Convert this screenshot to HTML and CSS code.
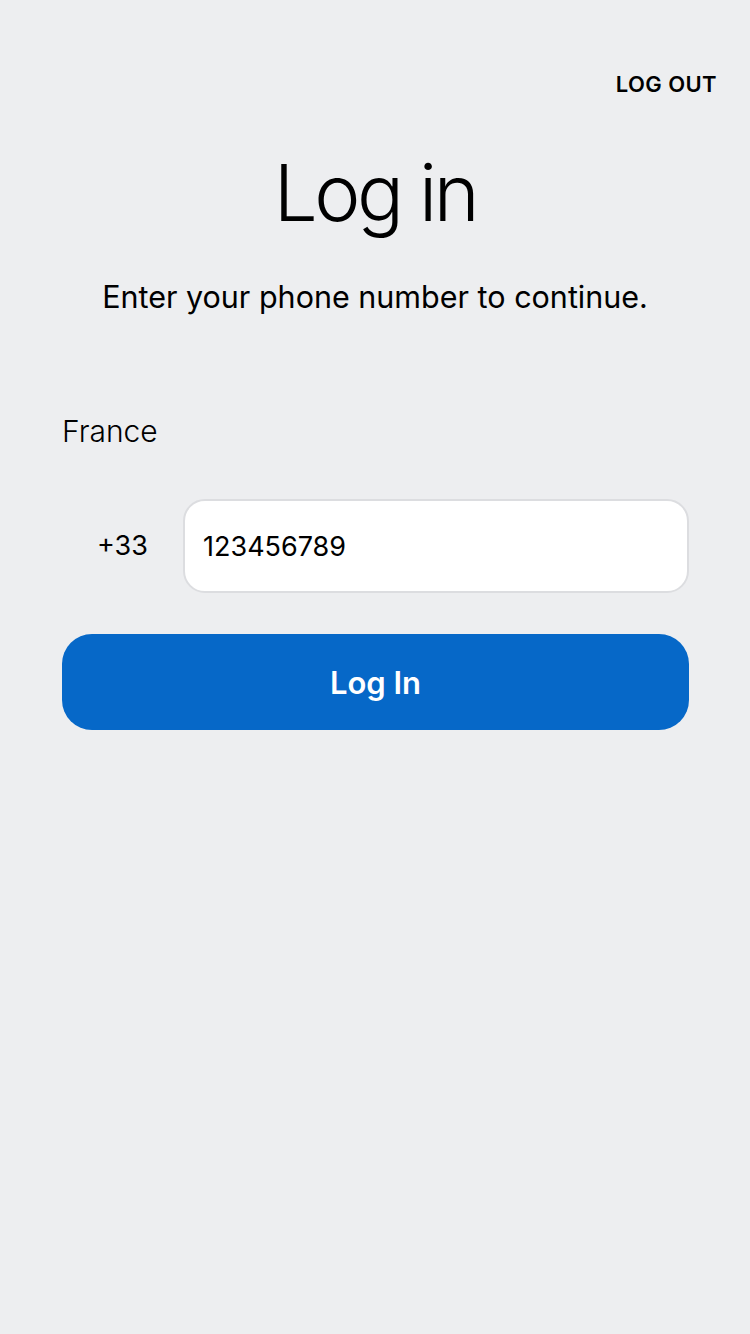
FILE: index.html
```html
<!DOCTYPE html>
<html>
<head>
<meta charset="utf-8">
<link rel="stylesheet" href="styles.css">
</head>
<body>
<div class="page">
  <div class="topbar"><span class="logout">LOG OUT</span></div>
  <h1 class="title">Log in</h1>
  <p class="subtitle">Enter your phone number to continue.</p>
  <div class="form">
    <div class="country">France</div>
    <div class="phone-row">
      <div class="prefix">+33</div>
      <div class="input">123456789</div>
    </div>
    <button class="btn">Log In</button>
  </div>
</div>
</body>
</html>
```
FILE: styles.css
```css
html, body {
  margin: 0;
  padding: 0;
  background: #edeef0;
}
body {
  font-family: Inter, "Noto Sans", sans-serif;
  color: #000;
  width: 750px;
  height: 1334px;
}
.page {
  display: flex;
  flex-direction: column;
}
.topbar {
  display: flex;
  justify-content: flex-end;
  padding: 70px 33px 0 0;
  height: 28px;
}
.logout {
  font-size: 22px;
  font-weight: 600;
  letter-spacing: 0.4px;
  line-height: 28px;
}
.title {
  margin: 52px 0 0;
  text-align: center;
  font-size: 78px;
  font-weight: 300;
  line-height: 86px;
  letter-spacing: -3.5px;
}
.subtitle {
  margin: 43px 0 0;
  text-align: center;
  font-size: 30.5px;
  font-weight: 400;
  line-height: 36px;
  letter-spacing: 0;
}
.form {
  padding: 0 62px;
  display: flex;
  flex-direction: column;
}
.country {
  margin-top: 98px;
  font-size: 30px;
  font-weight: 300;
  line-height: 36px;
}
.phone-row {
  margin-top: 50px;
  display: flex;
  align-items: center;
}
.prefix {
  width: 121px;
  text-align: center;
  font-size: 27px;
  line-height: 34px;
}
.input {
  flex: 1;
  height: 94px;
  box-sizing: border-box;
  background: #fff;
  border: 2px solid #dcdde0;
  border-radius: 22px;
  padding: 0 18px;
  display: flex;
  align-items: center;
  font-size: 27px;
  margin-right: -1px;
}
.btn {
  margin-top: 41px;
  height: 96px;
  border: none;
  border-radius: 30px;
  background: #0668c8;
  color: #fff;
  font-family: Inter, "Noto Sans", sans-serif;
  font-size: 31px;
  font-weight: 600;
  margin-right: -1px;
}
```
